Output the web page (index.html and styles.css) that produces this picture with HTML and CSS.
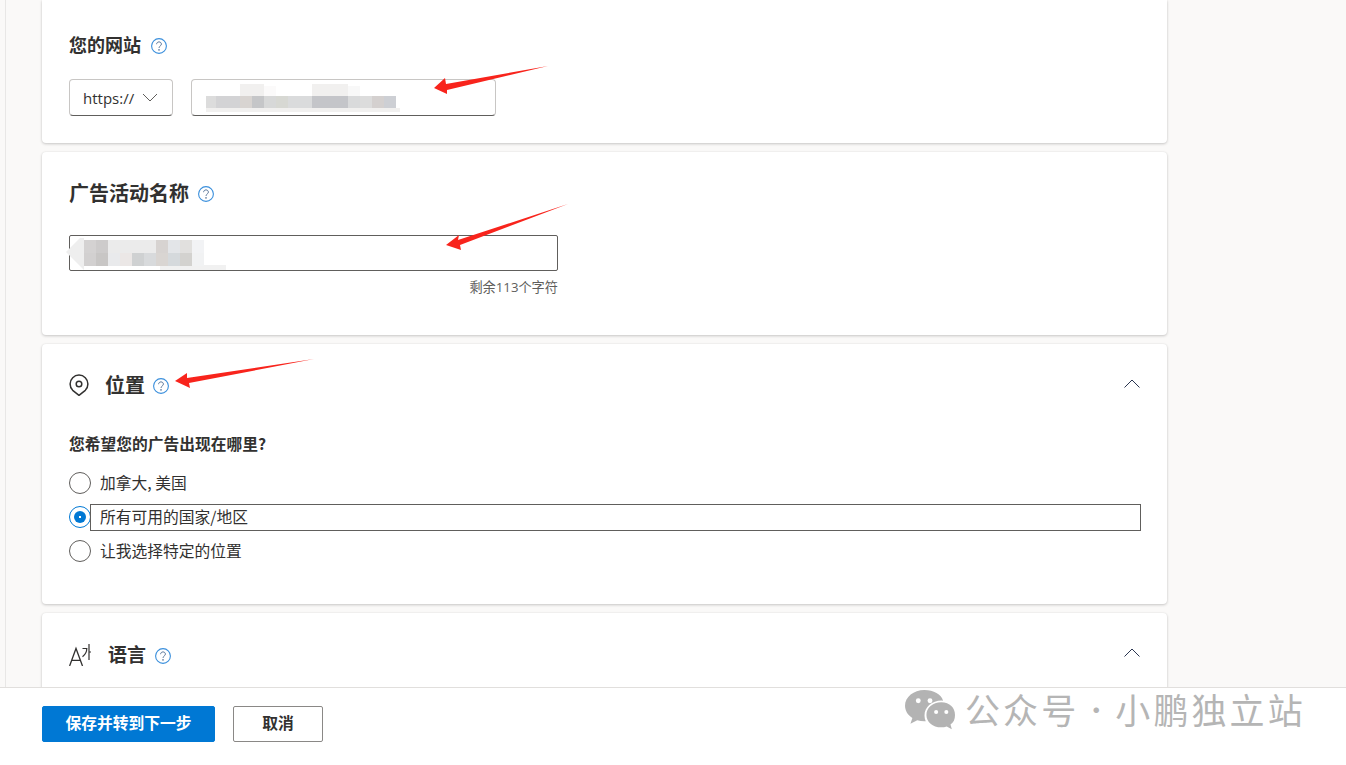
FILE: index.html
```html
<!DOCTYPE html>
<html lang="zh-CN">
<head>
<meta charset="utf-8">
<title>广告活动</title>
<link rel="stylesheet" href="styles.css">
</head>
<body>
<svg class="defs" width="0" height="0" aria-hidden="true">
  <symbol id="help" viewBox="0 0 16 16">
    <circle cx="8" cy="8" r="7.4" fill="none" stroke="#3a8fdc" stroke-width="1.100"/>
    <path d="M5.600 6.200C5.600 4.800 6.700 3.900 8 3.900s2.400.9 2.400 2.200c0 1.800-2.400 2-2.400 3.800" fill="none" stroke="#5a7699" stroke-width="1"/>
    <circle cx="8" cy="11.900" r=".8" fill="#5a7699"/>
  </symbol>
  <symbol id="up" viewBox="0 0 18 10">
    <path d="M1.500 9.500 9 2l7.500 7.500" fill="none" stroke="#2a3550" stroke-width="1"/>
  </symbol>
</svg>
<div class="viewport">
  <main class="scroll">
    <section class="card card-site">
      <h2 class="title title-sm">您的网站<svg class="help"><use href="#help"/></svg></h2>
      <div class="fields">
        <div class="select">https://<svg class="select-chev" viewBox="0 0 16 9"><path d="M1 1l7 7 7-7" fill="none" stroke="#605e5c" stroke-width="1"/></svg></div>
        <div class="text-input"></div>
      </div>
    </section>
    <section class="card card-name">
      <h2 class="title title-lg">广告活动名称<svg class="help"><use href="#help"/></svg></h2>
      <div class="name-field"></div>
      <p class="hint">剩余113个字符</p>
    </section>
    <section class="card card-loc">
      <header class="head">
        <h2 class="title title-lg">
          <svg class="icon-pin" viewBox="0 0 20 22"><path d="M10 21.300 3.700 16.300a8.900 8.900 0 1 1 12.600 0Z" fill="none" stroke="#323130" stroke-width="1.500" stroke-linejoin="round"/><circle cx="10" cy="10" r="2.800" fill="none" stroke="#323130" stroke-width="1.500"/></svg>
          <span class="nudge">位置</span><svg class="help"><use href="#help"/></svg>
        </h2>
        <svg class="chev"><use href="#up"/></svg>
      </header>
      <p class="question">您希望您的广告出现在哪里?</p>
      <div class="options">
        <div class="option"><span class="radio"></span><span class="label">加拿大, 美国</span></div>
        <div class="option"><span class="radio radio-on"></span><span class="label label-focus">所有可用的国家/地区</span></div>
        <div class="option"><span class="radio"></span><span class="label">让我选择特定的位置</span></div>
      </div>
    </section>
    <section class="card card-lang">
      <header class="head">
        <h2 class="title title-md">
          <svg class="icon-lang" viewBox="0 0 22 22"><path d="M.6 22 7 4.500 13.500 22M2.800 16.300h8.400" fill="none" stroke="#323130" stroke-width="1.300"/><path d="M13.500 4.500h4.300c0 3.200-1.500 6-4.300 8.200M20 0v16M20 8h2" fill="none" stroke="#323130" stroke-width="1.200"/></svg>
          <span>语言</span><svg class="help"><use href="#help"/></svg>
        </h2>
        <svg class="chev chev-lang"><use href="#up"/></svg>
      </header>
    </section>
  </main>
</div>
<footer class="footer">
  <button class="btn btn-primary" type="button">保存并转到下一步</button>
  <button class="btn btn-default" type="button">取消</button>
  <div class="watermark">
    <svg class="wechat" viewBox="0 0 50 40"><path fill="#b3b3b3" d="M20 0C9.500 0 1 6.900 1 15.400c0 4.900 2.800 9.200 7.200 12L6.300 33l6.700-3.500c2.200.7 4.500 1.100 7 1.100l1.300-.1c-.8-1.800-1.200-3.700-1.200-5.700 0-8.200 7.500-14.500 16.600-14.500l1.600.1C36.600 4.300 29 0 20 0Z"/><path fill="#b3b3b3" d="M36.500 12C28 12 22 17.500 22 24.300S28 36.500 36.500 36.500c1.900 0 3.700-.3 5.400-.9l5 2.900-1.300-4.700c3-2.200 4.400-5.100 4.400-9.500C50 17.500 45 12 36.500 12Z"/><circle cx="14" cy="10.500" r="2.400" fill="#fff"/><circle cx="25.500" cy="10.500" r="2.400" fill="#fff"/><circle cx="31.500" cy="21.500" r="2" fill="#fff"/><circle cx="41.500" cy="21.500" r="2" fill="#fff"/></svg>
    <span>公众号</span><span class="wm-dot">·</span><span>小鹏独立站</span>
  </div>
</footer>
<svg class="overlay" viewBox="0 0 1346 765" aria-hidden="true">
  <g fill="#f1f0ef">
    <rect x="206" y="108" width="194" height="4"/>
    <rect x="240" y="84" width="24" height="12"/>
    <rect x="264" y="86" width="12" height="10" fill="#fbfafa"/>
    <rect x="312" y="84" width="36" height="12"/>
    <rect x="348" y="86" width="12" height="10" fill="#f8f8f8"/>
  </g>
  <g>
    <rect x="206" y="96" width="10" height="12" fill="#dcdcdc"/>
    <rect x="216" y="96" width="24" height="12" fill="#d3d3d5"/>
    <rect x="240" y="96" width="12" height="12" fill="#d8d4d1"/>
    <rect x="252" y="96" width="12" height="12" fill="#c5c6c8"/>
    <rect x="264" y="96" width="12" height="12" fill="#d7d8d8"/>
    <rect x="276" y="96" width="12" height="12" fill="#d7d8d3"/>
    <rect x="288" y="96" width="24" height="12" fill="#dadbdc"/>
    <rect x="312" y="96" width="36" height="12" fill="#c4c5c9"/>
    <rect x="348" y="96" width="12" height="12" fill="#d9dadb"/>
    <rect x="360" y="96" width="12" height="12" fill="#dcdcdc"/>
    <rect x="372" y="96" width="12" height="12" fill="#d4d0cf"/>
    <rect x="384" y="96" width="12" height="12" fill="#cdcfd4"/>
  </g>
  <polygon points="66,252 80,238 84,238 84,270" fill="#eeeeee"/>
  <rect x="160" y="265" width="66" height="5" fill="#f1f1f1"/>
  <g>
    <rect x="84" y="240" width="12" height="13" fill="#d4d2d2"/>
    <rect x="96" y="240" width="12" height="13" fill="#cdcbcb"/>
    <rect x="108" y="240" width="48" height="13" fill="#ebebeb"/>
    <rect x="156" y="240" width="12" height="13" fill="#d7d3d1"/>
    <rect x="168" y="240" width="12" height="13" fill="#e3e5e8"/>
    <rect x="180" y="240" width="12" height="13" fill="#e1e0de"/>
    <rect x="192" y="240" width="12" height="13" fill="#f2f3f5"/>
    <rect x="84" y="253" width="12" height="13" fill="#d2d0d0"/>
    <rect x="96" y="253" width="12" height="13" fill="#c8c6c5"/>
    <rect x="108" y="253" width="12" height="13" fill="#e9eaec"/>
    <rect x="120" y="253" width="12" height="13" fill="#ebe7e6"/>
    <rect x="132" y="253" width="12" height="13" fill="#cfd1d2"/>
    <rect x="144" y="253" width="12" height="13" fill="#d8dadc"/>
    <rect x="156" y="253" width="12" height="13" fill="#d9d5d2"/>
    <rect x="168" y="253" width="12" height="13" fill="#d5d9dc"/>
    <rect x="180" y="253" width="12" height="13" fill="#d3d2cf"/>
    <rect x="192" y="253" width="12" height="13" fill="#f1f2f3"/>
  </g>
  <g fill="#f8241c">
    <polygon points="548,66 446,84 445,78 434,88 447,94 447,90"/>
    <polygon points="568,204 458,240 459,235 446,245 461,250 460,245"/>
    <polygon points="314,359 187,378 187,373 175,381 190,388 189,383"/>
  </g>
</svg>
</body>
</html>
```

FILE: styles.css
```css
* { box-sizing: border-box; }
html, body { margin: 0; padding: 0; height: 100%; }
body {
  width: 1346px;
  height: 765px;
  overflow: hidden;
  position: relative;
  background: #fff;
  color: #323130;
  font-family: "Open Sans", "Noto Sans CJK SC", sans-serif;
  font-size: 15px;
}
.defs { position: absolute; }
.viewport { height: 687px; background: #faf9f8; overflow: hidden; }
.scroll {
  height: 100%;
  margin-left: 5px;
  padding-left: 36px;
  border-left: 1px solid #e8e7e6;
  overflow: hidden;
}
.card {
  width: 1125px;
  margin-bottom: 9px;
  padding-left: 27px;
  padding-right: 26px;
  background: #fff;
  border-radius: 4px;
  box-shadow: 0 1px 3px rgba(0, 0, 0, .2), 0 0 2px rgba(0, 0, 0, .06);
}
.card-site { padding-top: 33px; padding-bottom: 27px; border-radius: 0 0 4px 4px; }
.card-name { padding-top: 30px; padding-bottom: 40px; }
.card-loc { padding-top: 29px; padding-bottom: 36px; }
.card-lang { padding-top: 30px; height: 120px; }

.title {
  display: flex;
  align-items: center;
  height: 24px;
  margin: 0;
  padding-bottom: 2px;
  font-family: "Noto Sans CJK SC", sans-serif;
  font-weight: 700;
  line-height: 22px;
}
.title-sm { font-size: 18px; }
.title-lg { font-size: 20px; }
.title-md { font-size: 19px; }
.nudge { margin-top: 2px; }
.help { width: 16px; height: 16px; flex: none; }
.title-sm .help { margin-left: 10px; margin-top: 4px; }
.card-name .help { margin-left: 9px; margin-top: 2px; }
.head .help { margin-left: 8px; margin-top: 4px; }
.head .title-md .help { margin-left: 9px; }

.fields { display: flex; gap: 18px; margin-top: 22px; }
.select, .text-input {
  height: 37px;
  background: #fff;
  border: 1px solid #c8c6c4;
  border-bottom-color: #605e5c;
  border-radius: 4px;
}
.select {
  display: flex;
  align-items: center;
  width: 104px;
  padding-left: 13px;
}
.select-chev { width: 16px; height: 9px; margin-left: 8px; }
.text-input { width: 305px; }

.name-field {
  width: 489px;
  height: 36px;
  margin-top: 29px;
  border: 1px solid #605e5c;
  border-radius: 2px;
}
.hint {
  width: 489px;
  margin: 8px 0 0;
  color: #605e5c;
  font-size: 13.200px;
  line-height: 16px;
  text-align: right;
}

.head { display: flex; align-items: center; justify-content: space-between; }
.icon-pin { width: 20px; height: 22px; margin-right: 16px; margin-top: 2px; flex: none; }
.icon-lang { width: 22px; height: 22px; margin-right: 17px; margin-top: 2px; flex: none; }
.chev { width: 18px; height: 10px; flex: none; margin-top: -5px; }
.chev-lang { margin-top: -6px; }

.question {
  height: 20px;
  margin: 38px 0 0;
  font-family: "Noto Sans CJK SC", sans-serif;
  font-size: 15.750px;
  font-weight: 700;
  line-height: 18px;
}
.options { margin-top: 11px; }
.option { display: flex; align-items: center; height: 34px; }
.radio {
  position: relative;
  width: 22px;
  height: 22px;
  flex: none;
  margin-right: -1px;
  background: #fff;
  border: 1px solid #605e5c;
  border-radius: 50%;
}
.radio-on { border-color: #0078d4; }
.radio-on::after {
  content: "";
  position: absolute;
  left: 4px;
  top: 4px;
  width: 12px;
  height: 12px;
  border-radius: 50%;
  background: radial-gradient(circle, #fff 0 1px, #0078d4 1.5px);
}
.label {
  flex: 1;
  position: relative;
  height: 27px;
  padding-left: 9px;
  border: 1px solid transparent;
  line-height: 23px;
  font-size: 15.750px;
  font-family: "Noto Sans CJK SC", sans-serif;
}
.label-focus { border-color: #605e5c; }

.footer {
  position: relative;
  display: flex;
  gap: 18px;
  height: 78px;
  padding: 18px 0 0 42px;
  background: #fff;
  border-top: 1px solid #e1dfdd;
}
.btn {
  height: 36px;
  padding: 0 0 2px;
  font-family: "Noto Sans CJK SC", sans-serif;
  font-size: 15.750px;
  font-weight: 700;
  line-height: 20px;
  border-radius: 2px;
}
.btn-primary { width: 173px; color: #fff; background: #0078d4; border: 1px solid #0078d4; }
.btn-default { width: 90px; color: #323130; background: #fff; border: 1px solid #8a8886; }

.watermark {
  position: absolute;
  left: 904px;
  top: 0;
  display: flex;
  align-items: center;
  height: 40px;
  color: #b5b5b5;
  font-family: "Noto Sans CJK SC", sans-serif;
  font-size: 35px;
  letter-spacing: 3.100px;
  white-space: nowrap;
}
.wechat { width: 51px; height: 41px; margin-right: 10px; margin-top: 5px; flex: none; }
.wm-dot { width: 38px; margin-left: -2px; text-align: center; letter-spacing: 0; font-size: 26px; }

.overlay {
  position: absolute;
  left: 0;
  top: 0;
  width: 1346px;
  height: 765px;
  pointer-events: none;
}
```
